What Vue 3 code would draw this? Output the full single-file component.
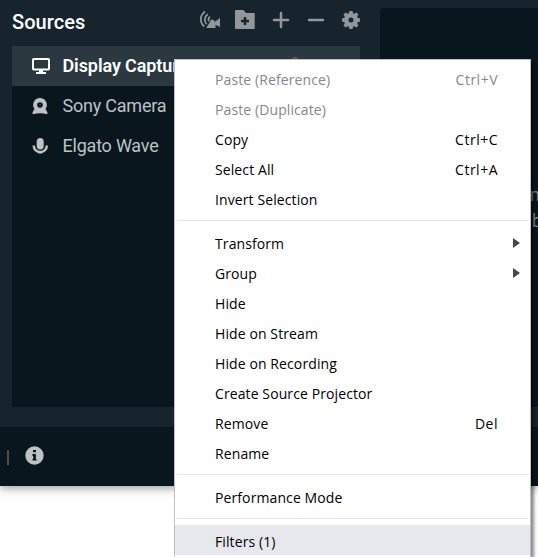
<script setup>
const sources = [
  { name: 'Display Capture', icon: 'monitor', active: true },
  { name: 'Sony Camera', icon: 'camera' },
  { name: 'Elgato Wave', icon: 'mic' },
]
const groups = [
  [
    { label: 'Paste (Reference)', key: 'Ctrl+V', disabled: true },
    { label: 'Paste (Duplicate)', disabled: true },
    { label: 'Copy', key: 'Ctrl+C' },
    { label: 'Select All', key: 'Ctrl+A' },
    { label: 'Invert Selection' },
  ],
  [
    { label: 'Transform', sub: true },
    { label: 'Group', sub: true },
    { label: 'Hide' },
    { label: 'Hide on Stream' },
    { label: 'Hide on Recording' },
    { label: 'Create Source Projector' },
    { label: 'Remove', key: 'Del' },
    { label: 'Rename' },
  ],
  [{ label: 'Performance Mode' }],
  [{ label: 'Filters (1)', hover: true }],
]
</script>

<template>
  <div class="page">
    <div class="window">
      <div class="panels">
        <section class="sources">
          <header class="head">
            <h2>Sources</h2>
            <div class="tools">
              <svg class="cast" width="20" height="20" viewBox="0 0 20 20">
                <path d="M5 1.500C-.4 5.500-.4 12.500 4.200 16.500M7.700 4.200C4 7 4 11.500 6.700 14.200M10 6.800C8.300 8 8.200 9.800 9 11.300" fill="none" stroke="currentColor" stroke-width="1.700" />
                <path d="M11.500 9.200L14.500 10.500V12L20 8V17L15.500 14.700V18H6.200Z" fill="currentColor" />
              </svg>
              <svg class="folder" width="20" height="20" viewBox="0 0 20 20">
                <path fill-rule="evenodd" d="M1 0H8.500L11 3H18.700Q19.700 3 19.700 4V18Q19.700 19 18.700 19H1Q0 19 0 18V1Q0 0 1 0ZM8.700 7V9.700H6V12.300H8.700V15H11.300V12.300H14V9.700H11.300V7Z" fill="currentColor" />
              </svg>
              <svg class="plus" width="18" height="18" viewBox="0 0 18 18"><path d="M9 2V16M2 9H16" stroke="currentColor" stroke-width="2.500" stroke-linecap="round" /></svg>
              <svg class="minus" width="18" height="18" viewBox="0 0 18 18"><path d="M2 9H16" stroke="currentColor" stroke-width="2.500" stroke-linecap="round" /></svg>
              <svg class="gear" width="18" height="18" viewBox="0 0 18 18">
                <path fill-rule="evenodd" d="M7.500 0H10.500L11.200 2.400L12.200 2.800L14.400 1.600L16.400 3.600L15.200 5.800L15.600 6.800L18 7.500V10.500L15.600 11.200L15.200 12.200L16.400 14.400L14.400 16.400L12.200 15.200L11.200 15.600L10.500 18H7.500L6.800 15.600L5.800 15.200L3.600 16.400L1.600 14.400L2.800 12.200L2.400 11.200L0 10.500V7.500L2.400 6.800L2.800 5.800L1.600 3.600L3.600 1.600L5.800 2.800L6.800 2.400ZM9 6.500A2.500 2.500 0 1 0 9 11.500A2.500 2.500 0 1 0 9 6.500Z" fill="currentColor" />
              </svg>
            </div>
          </header>
          <ul class="list">
            <li v-for="s in sources" :key="s.name" :class="{ active: s.active }">
              <svg v-if="s.icon === 'monitor'" width="18" height="18" viewBox="0 0 18 18">
                <rect x="1" y="2" width="16" height="10.500" rx=".7" fill="none" stroke="currentColor" stroke-width="2" />
                <path d="M7 13H11V15H14V17H4V15H7Z" fill="currentColor" />
              </svg>
              <svg v-else-if="s.icon === 'camera'" width="18" height="18" viewBox="0 0 18 18">
                <path fill-rule="evenodd" d="M8 1A6.800 6.800 0 0 1 13.500 11.800L15.600 15.800Q15.600 17.200 14.500 17.200Q12.500 16.300 8 16.300Q3.500 16.300 1.500 17.200Q.4 17.200 .4 15.800L2.500 11.800A6.800 6.800 0 0 1 8 1ZM8 5.200A2.800 2.800 0 1 0 8 10.800A2.800 2.800 0 1 0 8 5.200Z" fill="currentColor" />
                <circle cx="8" cy="8" r="1.100" fill="currentColor" opacity=".2" />
              </svg>
              <svg v-else width="18" height="18" viewBox="0 0 18 18">
                <rect x="4.700" y="1" width="7" height="11.500" rx="3.500" fill="currentColor" />
                <path d="M1.700 8.500C1.700 17.200 14.800 17.200 14.800 8.500" fill="none" stroke="currentColor" stroke-width="2.500" />
                <path d="M6.500 14H10V16.500H6.500Z" fill="currentColor" />
              </svg>
              <span>{{ s.name }}</span>
              <i v-if="s.active" class="eye"></i>
            </li>
          </ul>
        </section>
        <section class="mixer">
          <p>m</p>
          <p>b</p>
        </section>
      </div>
      <footer class="footer">
        <span class="bar"></span>
        <svg width="19" height="19" viewBox="0 0 19 19">
          <path fill-rule="evenodd" d="M9.500 .3A9.200 9.200 0 1 1 9.500 18.700A9.200 9.200 0 1 1 9.500 .3ZM8 4V6.200H11V4ZM7.300 8V9.700H8.200V13H7.500V14.600H11.500V13H10.900V8Z" fill="currentColor" />
        </svg>
      </footer>
    </div>

    <div class="menu">
      <div v-for="(g, i) in groups" :key="i" class="group">
        <div v-for="m in g" :key="m.label" class="item" :class="{ disabled: m.disabled, hover: m.hover }">
          <span>{{ m.label }}</span>
          <span v-if="m.key" class="key">{{ m.key }}</span>
          <svg v-if="m.sub" class="arrow" width="7" height="10" viewBox="0 0 7 10"><path d="M0 0L7 5L0 10Z" fill="#484848" /></svg>
        </div>
      </div>
    </div>
  </div>
</template>

<style>
body { margin: 0; background: #fefefe; overflow: hidden; }
</style>
<style scoped>
.page { position: relative; width: 538px; height: 557px; overflow: hidden; background: #fefefe; }
.window { height: 486px; background: #17242d; box-shadow: 0 2px 9px rgba(0, 0, 0, .4); font-family: Roboto, sans-serif; }
.panels { display: flex; height: 427px; box-sizing: border-box; padding: 0 0 20px 12px; gap: 20px; }
.sources { width: 348px; display: flex; flex-direction: column; }
.head { display: flex; justify-content: space-between; height: 46px; box-sizing: border-box; }
h2 { margin: 10px 0 0; font-size: 20px; line-height: 24px; font-weight: 500; color: #fff; letter-spacing: .05px; }
.tools { display: flex; color: #91979b; }
.tools svg { flex: none; }
.cast { margin: 10px 15px 0 0; }
.folder { margin: 10px 17px 0 0; }
.plus { margin: 11px 18px 0 0; }
.minus { margin: 11px 17px 0 0; }
.gear { margin: 11px 0 0; }
.cast, .folder, .plus { transform: translateX(1px); }
.list { flex: 1; margin: 0; padding: 0; list-style: none; background: #09161d; }
li { display: flex; align-items: center; height: 40px; padding-left: 20px; gap: 12.500px; color: #bdc2c4; font-size: 18px; letter-spacing: -.22px; }
li > span { margin-top: -2px; }
li.active { background: #2b383f; color: #fff; font-weight: 600; letter-spacing: -.1px; }
.eye { width: 8px; height: 8px; margin: -11px 61px 0 auto; border-radius: 50%; background: #4f5a60; }
.mixer { flex: 1; margin-top: 8px; padding: 174px 0 0 150px; border-radius: 4px 0 0 0; background: #09161d; overflow: hidden; }
.mixer p { margin: 0; font-size: 18px; line-height: 26px; color: #7b868c; }
.mixer p + p { padding-left: 2px; }
.footer { display: flex; align-items: center; height: 59px; box-sizing: border-box; padding: 0 0 3px 7px; gap: 16px; background: #09161d; color: #bdc2c4; }
.bar { width: 1.500px; height: 15px; margin-top: 4px; background: #4a4d4d; }
.menu { position: absolute; left: 174px; top: 59px; width: 357px; height: 520px; box-sizing: border-box; padding-top: 3px; background: #fff; border: 1px solid #bfc0c1; box-shadow: 3px 3px 3px rgba(0, 0, 0, .45); font-family: "Open Sans", sans-serif; }
.group + .group { margin-top: 7px; padding-top: 6px; position: relative; }
.group + .group::before { content: ""; display: block; height: 1px; margin: -6px 1px 6px 2px; background: #e6e6ea; }
.item { display: flex; align-items: center; height: 30px; padding: 0 11px 0 40px; color: #000; font-size: 14px; font-weight: 370; letter-spacing: .1px; white-space: nowrap; }
.item > span { position: relative; top: 1px; }
.item.disabled { color: #85888b; }
.item.hover { background: #e7e8ed; }
.key { margin-left: auto; padding-right: 21px; letter-spacing: .5px; }
.arrow { margin: 1px -1px 0 auto; }
</style>
